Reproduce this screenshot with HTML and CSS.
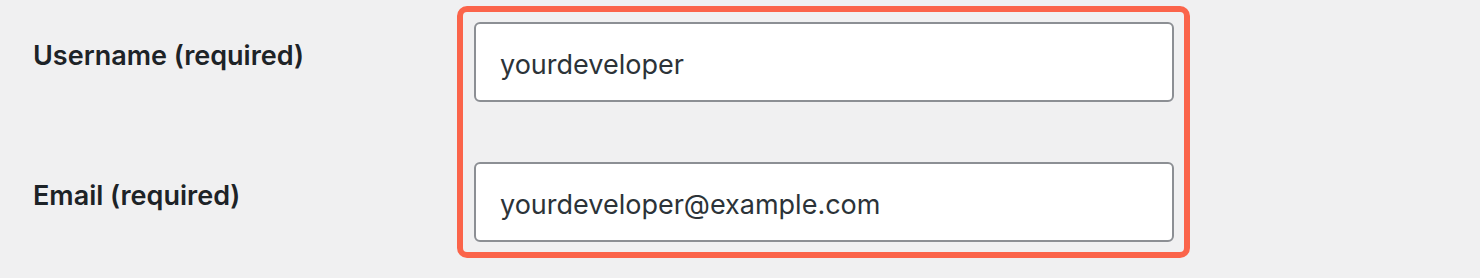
FILE: index.html
```html
<!DOCTYPE html>
<html lang="en">
<head>
<meta charset="utf-8">
<title>Profile fields</title>
<link rel="stylesheet" href="styles.css">
</head>
<body>
<div class="form">
  <div class="labels">
    <label class="label" for="user">Username (required)</label>
    <label class="label" for="email">Email (required)</label>
  </div>
  <div class="frame">
    <input class="field" id="user" type="text" value="yourdeveloper">
    <input class="field" id="email" type="text" value="yourdeveloper@example.com">
  </div>
</div>
</body>
</html>
```

FILE: styles.css
```css
html, body {
  margin: 0;
  padding: 0;
  background: #f0f0f1;
}
body {
  font-family: Inter, "Liberation Sans", sans-serif;
  color: #1d2327;
}
.form {
  display: flex;
  align-items: flex-start;
  padding-top: 6px;
}
.labels {
  box-sizing: border-box;
  width: 457px;
  padding-left: 33px;
  padding-top: 36px;
  display: flex;
  flex-direction: column;
  gap: 112px;
}
.label {
  font-size: 27px;
  line-height: 28px;
  font-weight: 600;
  color: #1d2327;
}
.frame {
  box-sizing: border-box;
  width: 733px;
  border: 6px solid #fb644a;
  border-radius: 10px;
  padding: 10px 10px 10px 11px;
  display: flex;
  flex-direction: column;
  gap: 60px;
}
.field {
  box-sizing: border-box;
  width: 700px;
  height: 80px;
  margin: 0;
  border: 2px solid #8c8f94;
  border-radius: 6px;
  background: #fff;
  padding: 4px 24px 0;
  font-family: Inter, "Liberation Sans", sans-serif;
  font-size: 27px;
  color: #2c3338;
  outline: none;
}
```
